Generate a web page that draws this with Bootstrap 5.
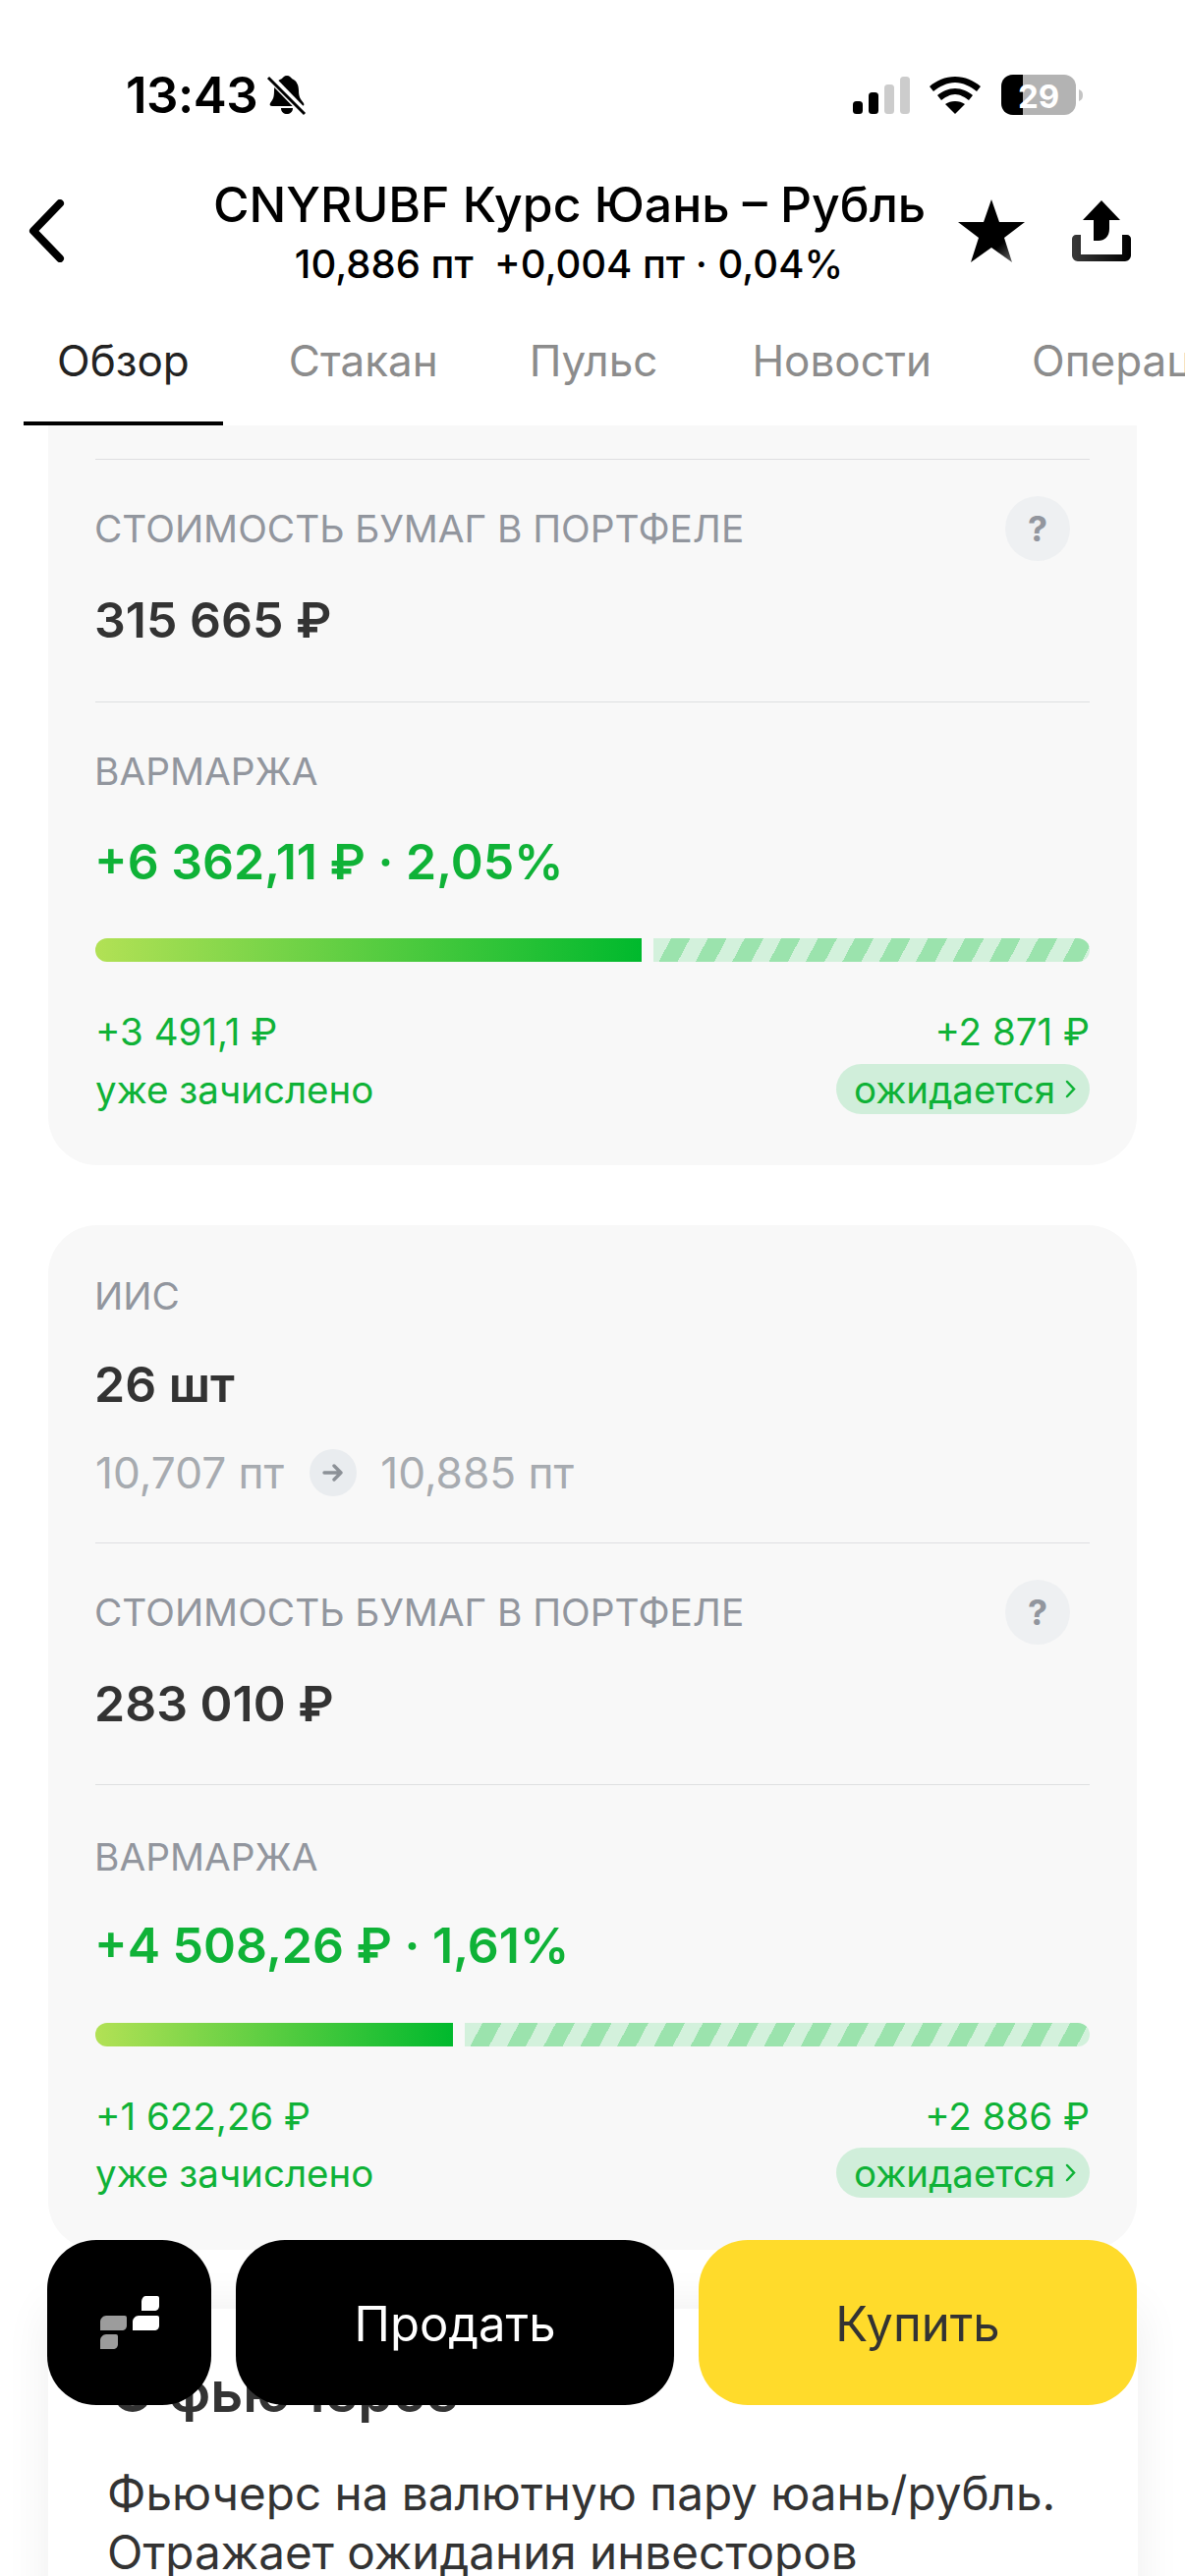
<!DOCTYPE html>
<html lang="ru">
<head>
<meta charset="utf-8">
<title>CNYRUBF</title>
<link href="https://cdn.jsdelivr.net/npm/bootstrap@5.3.0/dist/css/bootstrap.min.css" rel="stylesheet">
<style>
html,body{margin:0;background:#fff}
body{font-family:Inter,"Noto Sans",sans-serif;color:#333}
.screen{width:1206px;height:2622px;overflow:hidden;position:relative;background:#fff}
.statusbar{height:165px;padding:29px 103px 0 128px;align-items:center}
.clock{font-size:51px;font-weight:600;line-height:60px;color:#000;letter-spacing:-.5px}
.topbar{height:140px;padding:0 54px 0 28px}
.topbar-center{color:#000;text-align:center;width:724px;margin-left:149px;margin-right:34px;white-space:nowrap;flex:none}
.ttl{font-size:49.9px;font-weight:500;line-height:62px}
.sub{font-size:40px;font-weight:500;line-height:48px;margin-top:6px}
.tabbar{height:128px;padding-left:24px;gap:30px;flex-wrap:nowrap;overflow:hidden;position:relative}
.tabitem{font-size:44px;line-height:54px;padding:35px 33px 39px;color:#8c8c8c;white-space:nowrap;text-decoration:none}
.tabitem.on{color:#222;box-shadow:inset 0 -4px 0 #000;margin-right:4px;padding:35px 34px 39px}
.tabitem.tight{margin-right:-3px}
.tabitem.wide{margin-right:6px}
.feed{padding:0 49px;display:flex;flex-direction:column}
.greybox{background:#f8f8f8;border-radius:50px;padding:0 48px;width:1108px}
.greybox.cut{border-radius:0 0 50px 50px;padding-top:34px;height:753px}
.greybox.whole{margin-top:61px;height:1043px;padding-top:50px}
.rule{height:1px;background:#dedfe1}
.lab{font-size:38.8px;line-height:44px;color:#92969e;margin-left:-1px}
.val{font-size:50px;font-weight:600;line-height:62px;color:#333;margin-left:-1px}
.gain{color:#0fb237}
.sm{font-size:38.5px;line-height:44px}
.qmark{width:66px;height:66px;border-radius:50%;background:#eef0f2;color:#92969e;font-size:36px;font-weight:700;line-height:66px;text-align:center;margin-right:20px}
.price{font-size:44.2px;line-height:52px;color:#a7abb0}
.arrowdot{width:48px;height:48px;border-radius:50%;background:#e9ecef;margin:0 24px 0 26px}
.meter{height:24px;gap:12px}
.solid{height:24px;background:linear-gradient(90deg,#b2e155,#00b92d);border-radius:12px 0 0 12px}
.hatch{height:24px;flex:1;border-radius:0 12px 12px 0;background:repeating-linear-gradient(118deg,#d3f1dc 0,#d3f1dc 16px,#9be3ad 16px,#9be3ad 33px)}
.pill{background:#d0eeda;border-radius:26px;height:51px;padding:0 14px 0 18px;display:inline-flex;align-items:center;gap:10px}
.aboutbox{margin-top:60px;background:#fff;width:1109px;height:400px;box-shadow:0 0 44px rgba(0,0,0,.07);padding:55px 60px 0 60px}
.abouthead{font-size:57px;font-weight:600;line-height:60px;color:#333;margin-left:4px;white-space:nowrap}
.abouttext{font-size:47.6px;line-height:60px;color:#333;margin-top:43px;white-space:nowrap}
.actions{position:absolute;left:48px;top:2280px;width:1109px;height:168px;display:flex;gap:25px}
.act{border:0;border-radius:50px;font-size:49px;height:168px;padding:3px 0 0;display:flex;align-items:center;justify-content:center}
.act-logo{width:167px;background:#000;padding:0}
.act-sell{width:446px;background:#000;color:#fff}
.act-buy{width:446px;background:#ffdb2b;color:#333}
</style>
</head>
<body>
<div class="screen">
  <div class="statusbar d-flex justify-content-between">
    <div class="d-flex align-items-center gap-2">
      <span class="clock">13:43</span>
      <svg width="44" height="44" viewBox="0 0 42 44"><path d="M21 2c3 0 4 2 5 3 5 2 7 7 7 12 0 7 2 9 5 13 1 2 0 3-2 3H6c-2 0-3-1-2-3 3-4 4-6 4-13 0-5 2-10 8-12 1-1 2-3 5-3zM15 35h12c0 4-3 6-6 6s-6-2-6-6z" fill="#000"/><path d="M3 3l36 37" stroke="#fff" stroke-width="8"/><path d="M2 4l37 37" stroke="#000" stroke-width="3"/></svg>
    </div>
    <div class="d-flex align-items-center">
      <svg width="58" height="38" viewBox="0 0 58 38"><rect x="0" y="25" width="10" height="13" rx="3.5" fill="#000"/><rect x="16" y="16" width="10" height="22" rx="3.5" fill="#000"/><rect x="32" y="8" width="10" height="30" rx="3.5" fill="#ccc"/><rect x="48" y="0" width="10" height="38" rx="3.5" fill="#ccc"/></svg>
      <svg width="52" height="38" viewBox="0 0 52 38" style="margin-left:20px"><path d="M26 0c10 0 19 4 26 10l-4 5C42 10 34 6 26 6S10 10 4 15l-4-5C7 4 16 0 26 0z" fill="#000"/><path d="M26 12c7 0 13 3 18 7l-4 5c-4-3-9-6-14-6s-10 3-14 6l-4-5c5-4 11-7 18-7z" fill="#000"/><path d="M26 25c4 0 7 1 10 3L26 38 16 28c3-2 6-3 10-3z" fill="#000"/></svg>
      <svg width="84" height="42" viewBox="0 0 84 42" style="margin-left:21px"><rect width="76" height="41" rx="12" fill="#b3b3b3"/><path d="M12 0h10v41H12C5 41 0 36 0 29V12C0 5 5 0 12 0z" fill="#000"/><path d="M79 15c3 1 4 3 4 6s-1 5-4 6z" fill="#c4c4c4"/><text x="38" y="34" text-anchor="middle" font-family="Inter,sans-serif" font-weight="700" font-size="33" fill="#fff">29</text></svg>
    </div>
  </div>

  <div class="topbar d-flex align-items-center">
    <svg class="flex-shrink-0" width="40" height="64" viewBox="0 0 40 64"><path d="M33 4L6 32l27 28" fill="none" stroke="#000" stroke-width="8" stroke-linecap="round" stroke-linejoin="round"/></svg>
    <div class="topbar-center">
      <div class="ttl">CNYRUBF Курс Юань – Рубль</div>
      <div class="sub">10,886 пт&nbsp; +0,004 пт · 0,04%</div>
    </div>
    <div class="d-flex align-items-center flex-shrink-0">
      <svg width="68" height="64" viewBox="0 0 68 64"><defs><linearGradient id="sg" x1=".45" y1=".5" x2=".9" y2="1"><stop offset=".42" stop-color="#000"/><stop offset="1" stop-color="#777"/></linearGradient></defs><path d="M34 0l8 23h26L47 39l8 25-21-15-21 15 8-25L0 23h26z" fill="url(#sg)"/></svg>
      <svg width="60" height="62" viewBox="0 0 60 62" style="margin-left:48px"><defs><linearGradient id="bg1" x1="0" x2="1"><stop offset="0" stop-color="#3a3a3a"/><stop offset="1" stop-color="#000"/></linearGradient></defs><path d="M30 0l19 20H38v9c0 8-5 12-11 12h-5V20H11z" fill="#000"/><path d="M0 39c0-2 2-4 4-4h5v20h42V35h5c2 0 4 2 4 4v17c0 3-3 6-6 6H6c-3 0-6-3-6-6z" fill="url(#bg1)"/></svg>
    </div>
  </div>

  <nav class="nav tabbar">
    <a class="tabitem on" href="#">Обзор</a>
    <a class="tabitem tight" href="#">Стакан</a>
    <a class="tabitem" href="#">Пульс</a>
    <a class="tabitem wide" href="#">Новости</a>
    <a class="tabitem" href="#">Операции</a>
  </nav>

  <div class="feed">
    <section class="greybox cut">
      <div class="rule"></div>
      <div class="d-flex justify-content-between align-items-center" style="margin-top:36px;height:68px">
        <div class="lab">СТОИМОСТЬ БУМАГ В ПОРТФЕЛЕ</div><div class="qmark">?</div>
      </div>
      <div class="val" style="margin-top:28px">315 665 ₽</div>
      <div class="rule" style="margin-top:52px"></div>
      <div class="lab" style="margin-top:48px">ВАРМАРЖА</div>
      <div class="val gain" style="margin-top:39px">+6 362,11 ₽ · 2,05%</div>
      <div class="meter d-flex" style="margin-top:47px"><div class="solid" style="width:556px"></div><div class="hatch"></div></div>
      <div class="d-flex justify-content-between gain sm" style="margin-top:49px"><span>+3 491,1 ₽</span><span>+2 871 ₽</span></div>
      <div class="d-flex justify-content-between align-items-center gain sm" style="margin-top:11px"><span>уже зачислено</span><span class="pill">ожидается<svg width="11" height="19" viewBox="0 0 11 19"><path d="M2 2l7 7.5L2 17" fill="none" stroke="#0fb237" stroke-width="2.5" stroke-linecap="round"/></svg></span></div>
    </section>

    <section class="greybox whole">
      <div class="lab">ИИС</div>
      <div class="val" style="margin-top:37px">26 шт</div>
      <div class="d-flex align-items-center" style="margin-top:35px;height:48px">
        <span class="price">10,707 пт</span>
        <span class="arrowdot d-flex align-items-center justify-content-center"><svg width="22" height="18" viewBox="0 0 22 18"><path d="M2 9h17M12 2l7 7-7 7" fill="none" stroke="#8c9197" stroke-width="3.4" stroke-linecap="round" stroke-linejoin="round"/></svg></span>
        <span class="price">10,885 пт</span>
      </div>
      <div class="rule" style="margin-top:47px"></div>
      <div class="d-flex justify-content-between align-items-center" style="margin-top:36px;height:68px">
        <div class="lab">СТОИМОСТЬ БУМАГ В ПОРТФЕЛЕ</div><div class="qmark">?</div>
      </div>
      <div class="val" style="margin-top:28px">283 010 ₽</div>
      <div class="rule" style="margin-top:51px"></div>
      <div class="lab" style="margin-top:51px">ВАРМАРЖА</div>
      <div class="val gain" style="margin-top:37px">+4 508,26 ₽ · 1,61%</div>
      <div class="meter d-flex" style="margin-top:48px"><div class="solid" style="width:364px"></div><div class="hatch"></div></div>
      <div class="d-flex justify-content-between gain sm" style="margin-top:49px"><span>+1 622,26 ₽</span><span>+2 886 ₽</span></div>
      <div class="d-flex justify-content-between align-items-center gain sm" style="margin-top:10px"><span>уже зачислено</span><span class="pill">ожидается<svg width="11" height="19" viewBox="0 0 11 19"><path d="M2 2l7 7.5L2 17" fill="none" stroke="#0fb237" stroke-width="2.5" stroke-linecap="round"/></svg></span></div>
    </section>

    <section class="aboutbox">
      <div class="abouthead">О фьючерсе</div>
      <div class="abouttext">Фьючерс на валютную пару юань/рубль.<br>Отражает ожидания инвесторов</div>
    </section>
  </div>

  <div class="actions">
    <button class="btn act act-logo" type="button" aria-label="Логотип">
      <svg width="60" height="54" viewBox="0 0 60 54"><path d="M46 0h12a2 2 0 0 1 2 2v8c0 3-2 5-5 5H42v-9c0-3 2-6 4-6z" fill="#fff"/><path d="M39 20h19a2 2 0 0 1 2 2v8c0 3-2 5-5 5H33v-9c0-3 3-6 6-6z" fill="#fff"/><path d="M6 20h19a2 2 0 0 1 2 2v8c0 3-2 5-5 5H0v-9c0-3 3-6 6-6z" fill="#9c9c9c"/><path d="M6 39h10a2 2 0 0 1 2 2v8c0 3-2 5-5 5H0v-9c0-3 3-6 6-6z" fill="#9c9c9c"/></svg>
    </button>
    <button class="btn act act-sell" type="button">Продать</button>
    <button class="btn act act-buy" type="button">Купить</button>
  </div>
</div>
</body>
</html>
